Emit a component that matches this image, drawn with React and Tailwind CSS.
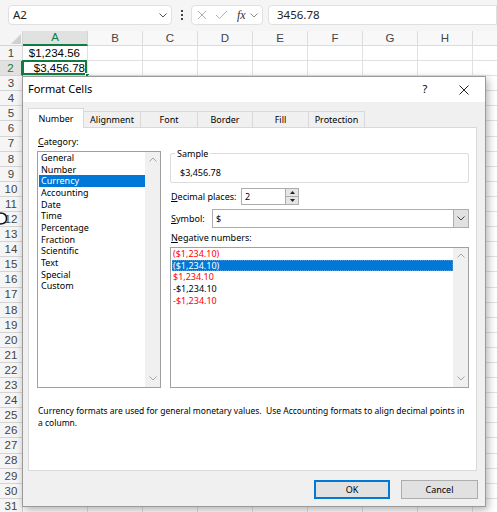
import React from 'react';

const ui = "font-['Noto_Sans',sans-serif]";
const grid = "font-['Liberation_Sans',Arial,sans-serif]";

const cols = [
  { k: 'A', w: 'w-[65px]' },
  { k: 'B', w: 'w-[55px]' },
  { k: 'C', w: 'w-[55px]' },
  { k: 'D', w: 'w-[55px]' },
  { k: 'E', w: 'w-[55px]' },
  { k: 'F', w: 'w-[55px]' },
  { k: 'G', w: 'w-[55px]' },
  { k: 'H', w: 'w-[55px]' },
  { k: '', w: 'w-[55px]' },
];

const rows = Array.from({ length: 31 }, (_, i) => i + 1);

const categories = ['General', 'Number', 'Currency', 'Accounting', 'Date', 'Time', 'Percentage', 'Fraction', 'Scientific', 'Text', 'Special', 'Custom'];

const negatives = [
  { t: '($1,234.10)', red: true },
  { t: '($1,234.10)', sel: true },
  { t: '$1,234.10', red: true },
  { t: '-$1,234.10' },
  { t: '-$1,234.10', red: true },
];

const tabs = [
  { label: 'Number', w: 'w-[56px]', active: true },
  { label: 'Alignment', w: 'w-[57px]' },
  { label: 'Font', w: 'w-[57px]' },
  { label: 'Border', w: 'w-[55px]' },
  { label: 'Fill', w: 'w-[56px]' },
  { label: 'Protection', w: 'w-[56px]' },
];

function Chevron({ up, color = '#a6a6a6', className = '' }) {
  return (
    <svg width="8" height="5" viewBox="0 0 8 5" className={className}>
      <path d={up ? 'M0.5 4.5 L4 1 L7.5 4.5' : 'M0.5 0.5 L4 4 L7.5 0.5'} fill="none" stroke={color} strokeWidth="1" />
    </svg>
  );
}

function ScrollBar() {
  return (
    <div className="w-[15px] shrink-0 h-full bg-[#f0f0f0] flex flex-col justify-between items-center pt-[5px] pb-[6px]">
      <Chevron up />
      <Chevron />
    </div>
  );
}

function TopBar() {
  return (
    <div className={`h-[31px] shrink-0 bg-[#f5f5f5] flex items-start pt-[5px] ${ui}`}>
      <div className="ml-[8px] w-[164px] h-[20px] bg-white border border-[#e0e0e0] rounded-[4px] flex items-center pl-[4px] pr-[4px]">
        <span className="text-[11.5px] text-[#222]">A2</span>
        <Chevron color="#555" className="ml-auto" />
      </div>
      <div className="w-[19px] h-[20px] flex flex-col items-center justify-center gap-[2px]">
        <span className="w-[2px] h-[2px] bg-[#444]" />
        <span className="w-[2px] h-[2px] bg-[#444]" />
        <span className="w-[2px] h-[2px] bg-[#444]" />
      </div>
      <div className="w-[72px] h-[20px] bg-white border border-[#e0e0e0] rounded-[4px] flex items-center pl-[5px]">
        <svg width="10" height="10" viewBox="0 0 10 10">
          <path d="M1 1 L9 9 M9 1 L1 9" stroke="#b0b0b0" strokeWidth="1" />
        </svg>
        <svg width="13" height="10" viewBox="0 0 13 10" className="ml-[8px]">
          <path d="M1 5 L4.5 8.5 L12 1" fill="none" stroke="#b0b0b0" strokeWidth="1" />
        </svg>
        <span className="ml-[9px] text-[12px] italic font-['Liberation_Serif',serif] text-[#333] leading-none">fx</span>
        <Chevron color="#888" className="ml-[4px]" />
      </div>
      <div className="ml-[5px] flex-1 h-[20px] bg-white border border-[#e0e0e0] rounded-l-[4px] flex items-center pl-[8px]">
        <span className="text-[11.5px] text-[#222]">3456.78</span>
      </div>
    </div>
  );
}

function Sheet() {
  return (
    <div className={`flex flex-col ${grid}`}>
      <div className="flex h-[15px] shrink-0">
        <div className="w-[23px] shrink-0 bg-[#f5f5f5] border-r border-b border-[#d4d4d4] flex items-end justify-end pr-[1px] pb-[1px]">
          <svg width="10" height="10" viewBox="0 0 10 10">
            <path d="M10 0 L10 10 L0 10 Z" fill="#d0d0d0" />
          </svg>
        </div>
        {cols.map((c, i) =>
          c.k === 'A' ? (
            <div key={i} className={`${c.w} shrink-0 bg-[#e1e1e1] border-r border-[#d4d4d4] border-b-2 border-b-[#107c41] flex items-center justify-center pt-[1px] text-[11.5px] text-[#107c41]`}>
              {c.k}
            </div>
          ) : (
            <div key={i} className={`${c.w} shrink-0 bg-[#f8f8f8] border-r border-b border-[#dcdcdc] flex items-center justify-center pt-[2px] text-[11.5px] text-[#444]`}>
              {c.k}
            </div>
          )
        )}
      </div>
      {rows.map((n) => (
        <div key={n} className="flex h-[15.1px] shrink-0">
          {n === 2 ? (
            <div className="w-[23px] shrink-0 bg-[#e1e1e1] border-b border-[#d4d4d4] border-r-2 border-r-[#107c41] flex items-center justify-center pt-[1px] text-[11.5px] text-[#107c41]">
              {n}
            </div>
          ) : (
            <div className="w-[23px] shrink-0 bg-[#f5f5f5] border-r border-b border-[#d4d4d4] flex items-center justify-center pt-[1px] text-[11.5px] text-[#444]">
              {n}
            </div>
          )}
          {cols.map((c, i) => (
            <div key={i} className={`${c.w} shrink-0 relative border-r border-b border-[#e1e1e1] flex items-center justify-end pt-[1px] text-[11.5px] text-black ${n === 1 && c.k === 'A' ? 'pr-[7px]' : 'pr-[2px]'}`}>
              {n === 1 && c.k === 'A' && '$1,234.56'}
              {n === 2 && c.k === 'A' && (
                <>
                  $3,456.78
                  <div className="absolute -left-[1px] -top-[1px] right-0 bottom-0 border-2 border-[#107c41]" />
                  <div className="absolute -right-[3px] -bottom-[3px] w-[5px] h-[5px] bg-[#107c41] border border-white" />
                </>
              )}
            </div>
          ))}
        </div>
      ))}
    </div>
  );
}

function Dialog() {
  return (
    <div className={`absolute left-[22px] top-[76px] w-[464px] h-[431px] border border-[#9a9a9a] bg-[#f0f0f0] shadow-[2px_3px_8px_rgba(0,0,0,0.3)] flex flex-col text-black ${ui}`}>
      <div className="h-[25px] shrink-0 bg-white flex items-center pl-[5px]">
        <span className="text-[11px]">Format Cells</span>
        <span className="ml-auto w-[20px] text-center text-[11px]">?</span>
        <div className="ml-[14px] mr-[6px] w-[30px] flex justify-center">
          <svg width="10" height="10" viewBox="0 0 10 10">
            <path d="M0.5 0.5 L9.5 9.5 M9.5 0.5 L0.5 9.5" stroke="#222" strokeWidth="1" />
          </svg>
        </div>
      </div>

      <div className="flex flex-col pl-[5px] pt-[6px]">
        <div className="flex items-end h-[19px] relative z-10">
          {tabs.map((t) =>
            t.active ? (
              <div key={t.label} className={`${t.w} h-[20px] -mb-[1px] bg-white border border-b-0 border-[#d9d9d9] flex items-center justify-center text-[9px]`}>
                {t.label}
              </div>
            ) : (
              <div key={t.label} className={`${t.w} h-[16px] bg-[#f0f0f0] border-t border-r border-[#d9d9d9] flex items-center justify-center text-[9px]`}>
                {t.label}
              </div>
            )
          )}
        </div>

        <div className="w-[449px] h-[344px] bg-white border border-[#d9d9d9] pl-[8px] pt-[8px] flex flex-col">
          <div className="flex gap-[9px]">
            <div className="w-[124px] flex flex-col">
              <div className="h-[12px] leading-[12px] text-[9px] pl-[1px]">
                <u className="underline-offset-[1px]">C</u>ategory:
              </div>
              <div className="mt-[3px] h-[237px] border border-[#a0a0a0] flex">
                <div className="flex-1 flex flex-col">
                  {categories.map((c) => (
                    <div key={c} className={`h-[11.67px] leading-[11.67px] text-[9px] pl-[2px] ml-[1px] ${c === 'Currency' ? 'bg-[#0078d7] text-white' : ''}`}>
                      {c}
                    </div>
                  ))}
                </div>
                <ScrollBar />
              </div>
            </div>

            <div className="w-[299px] flex flex-col text-[9px]">
              <fieldset className="mt-[12px] border border-[#dcdcdc] rounded-[2px] px-[4px] pb-[4px]">
                <legend className="px-[2px] leading-[11px]">Sample</legend>
                <div className="pl-[5px] pt-[8px] leading-[11px]">$3,456.78</div>
              </fieldset>

              <div className="mt-[5px] flex items-center h-[17px]">
                <span className="w-[71px] pl-[1px]">
                  <u className="underline-offset-[1px]">D</u>ecimal places:
                </span>
                <div className="w-[58px] h-[17px] border border-[#adadad] bg-white flex">
                  <span className="flex-1 pl-[3px] leading-[15px]">2</span>
                  <div className="w-[13px] flex flex-col border-l border-[#adadad]">
                    <div className="h-[7.5px] bg-[#e5e5e5] border-b border-[#adadad] flex items-center justify-center">
                      <svg width="5" height="3" viewBox="0 0 5 3"><path d="M0 3 L2.5 0 L5 3 Z" fill="#222" /></svg>
                    </div>
                    <div className="flex-1 bg-[#e5e5e5] flex items-center justify-center">
                      <svg width="5" height="3" viewBox="0 0 5 3"><path d="M0 0 L5 0 L2.5 3 Z" fill="#222" /></svg>
                    </div>
                  </div>
                </div>
              </div>

              <div className="mt-[4px] flex items-center h-[19px]">
                <span className="w-[42px] pl-[1px]">
                  <u className="underline-offset-[1px]">S</u>ymbol:
                </span>
                <div className="flex-1 h-[19px] border border-[#adadad] bg-white flex">
                  <span className="flex-1 pl-[3px] leading-[17px]">$</span>
                  <div className="w-[15px] bg-[#e1e1e1] border-l border-[#adadad] flex items-center justify-center">
                    <Chevron color="#444" />
                  </div>
                </div>
              </div>

              <div className="mt-[4px] h-[12px] leading-[12px] pl-[1px]">
                <u className="underline-offset-[1px]">N</u>egative numbers:
              </div>
              <div className="mt-[3px] h-[141px] border border-[#a0a0a0] flex">
                <div className="flex-1 flex flex-col">
                  {negatives.map((n, i) => (
                    <div
                      key={i}
                      className={`h-[11.67px] leading-[11.67px] pl-[1px] ml-[1px] ${n.sel ? 'bg-[#0078d7] text-white outline-1 outline-dotted -outline-offset-1 outline-[#4c9be3]' : n.red ? 'text-[#ff0000]' : 'text-black'}`}
                    >
                      {n.t}
                    </div>
                  ))}
                </div>
                <ScrollBar />
              </div>
            </div>
          </div>

          <div className="mt-[17px] text-[8.5px] leading-[11.5px] pl-[1px] whitespace-nowrap">
            <div>Currency formats are used for general monetary values.{'\u00a0 '}Use Accounting formats to align decimal points in</div>
            <div>a column.</div>
          </div>
        </div>

        <div className="mt-[9px] flex justify-end gap-[11px] mr-[7px] text-[9px]">
          <div className="w-[76px] h-[19px] bg-[#e1e1e1] border-2 border-[#0078d7] flex items-center justify-center">OK</div>
          <div className="w-[77px] h-[19px] bg-[#e1e1e1] border border-[#adadad] flex items-center justify-center">Cancel</div>
        </div>
      </div>
    </div>
  );
}

export default function App() {
  return (
    <div className="relative w-[497px] h-[512px] overflow-hidden bg-white flex flex-col">
      <TopBar />
      <Sheet />
      <Dialog />
      <svg width="8" height="13" viewBox="0 0 8 13" className="absolute left-0 top-[212px]">
        <path d="M0 1 Q6.5 1 6.5 6.5 Q6.5 12 0 12" fill="white" stroke="#111" strokeWidth="1.5" />
      </svg>
    </div>
  );
}
